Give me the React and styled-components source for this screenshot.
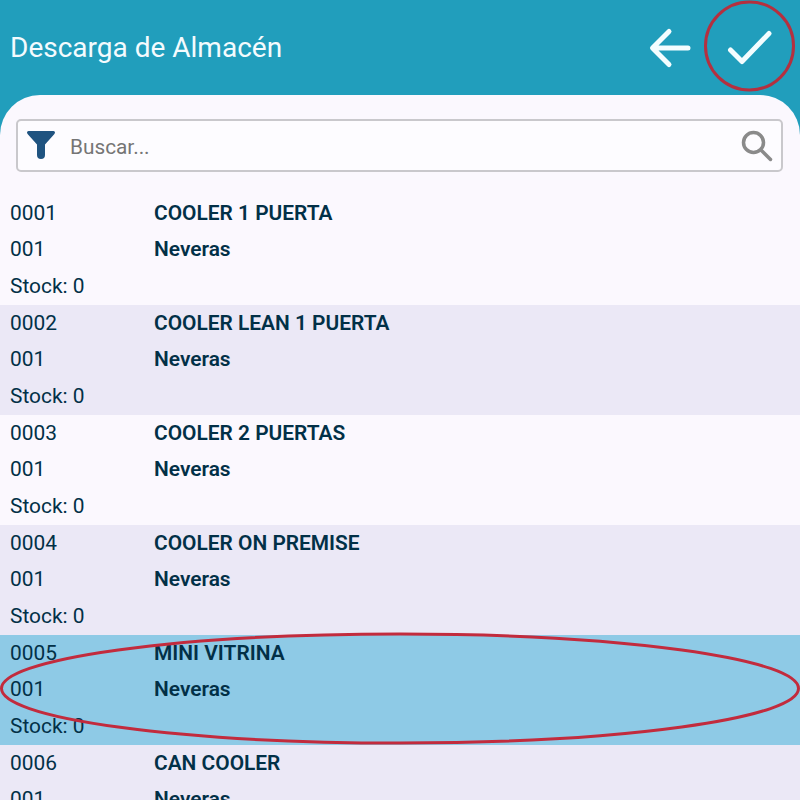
import React from 'react';
import styled, { createGlobalStyle } from 'styled-components';

const Global = createGlobalStyle`
  html, body { margin: 0; padding: 0; background: #fbf8fe; }
  body { font-family: Roboto, "Liberation Sans", sans-serif; }
`;

const Screen = styled.div`
  position: relative;
  width: 800px;
  height: 800px;
  overflow: hidden;
  background: #219ebc;
`;

const Header = styled.header`
  height: 95px;
  display: flex;
  align-items: center;
  justify-content: space-between;
  padding-left: 10px;
  box-sizing: border-box;
`;

const Title = styled.h1`
  margin: 0;
  font-size: 28px;
  font-weight: 400;
  color: #f4fbfe;
`;

const Actions = styled.div`
  display: flex;
  align-items: center;
`;

const IconButton = styled.div`
  width: ${p => p.$w}px;
  height: 95px;
  display: flex;
  align-items: center;
  justify-content: center;
`;

const Body = styled.main`
  height: 705px;
  background: #fbf8fe;
  border-radius: 40px 40px 0 0;
  padding-top: 24px;
  box-sizing: border-box;
  overflow: hidden;
`;

const Search = styled.div`
  height: 53px;
  margin: 0 17px 0 16px;
  box-sizing: border-box;
  display: flex;
  align-items: center;
  padding: 0 8px 0 9px;
  background: #fdfcff;
  border: 2px solid #c9c8cc;
  border-radius: 5px;
`;

const FilterIcon = styled.svg`
  flex: none;
  margin-top: -2px;
`;

const SearchText = styled.span`
  flex: 1;
  margin-left: 15px;
  padding-top: 2px;
  font-size: 20.8px;
  color: #757575;
`;

const List = styled.div`
  margin-top: 23px;
`;

const Row = styled.div`
  display: grid;
  grid-template-columns: 144px 1fr;
  grid-auto-rows: 36.3px;
  height: 110px;
  padding: 0 10px;
  box-sizing: border-box;
  align-items: center;
  color: #023047;
  font-size: 20.9px;
  background: ${p => (p.$selected ? '#8ecae6' : p.$alt ? '#ebe8f6' : 'transparent')};
`;

const Cell = styled.div`
  white-space: nowrap;
`;

const Strong = styled(Cell)`
  font-weight: 600;
`;

const Ellipse = styled.svg`
  position: absolute;
  left: 0;
  top: 625px;
  pointer-events: none;
`;

const Circle = styled.svg`
  position: absolute;
  left: 700px;
  top: 0;
  pointer-events: none;
`;

const items = [
  ['0001', 'COOLER 1 PUERTA'],
  ['0002', 'COOLER LEAN 1 PUERTA'],
  ['0003', 'COOLER 2 PUERTAS'],
  ['0004', 'COOLER ON PREMISE'],
  ['0005', 'MINI VITRINA'],
  ['0006', 'CAN COOLER'],
];

export default function App() {
  return (
    <Screen>
      <Global />
      <Header>
        <Title>Descarga de Almacén</Title>
        <Actions>
          <IconButton $w={60}>
            <svg width="44" height="44" viewBox="0 0 44 44" fill="none" stroke="#f4fdff" strokeWidth="5" strokeLinecap="round" strokeLinejoin="round">
              <path d="M40 22H5M21 5.5 4.5 22 21 38.5" />
            </svg>
          </IconButton>
          <IconButton $w={100}>
            <svg width="46" height="36" viewBox="0 0 46 36" fill="none" stroke="#f4fdff" strokeWidth="5" strokeLinecap="round" strokeLinejoin="round">
              <path d="M3.5 20 15 31.5 42 3.5" />
            </svg>
          </IconButton>
        </Actions>
      </Header>
      <Body>
        <Search>
          <FilterIcon width="28" height="28" viewBox="0 0 28 28">
            <path d="M0 1.5Q0 0 1.5 0h25Q28 0 28 1.5q0 .8-.8 1.7L18 13.5V24a4 4 0 0 1-8 0V13.5L.8 3.2Q0 2.3 0 1.5Z" fill="#1f5380" />
          </FilterIcon>
          <SearchText>Buscar...</SearchText>
          <svg width="32" height="32" viewBox="0 0 32 32" fill="none" stroke="#8a8a8a" strokeWidth="3.5" strokeLinecap="round">
            <circle cx="12.5" cy="12.5" r="10" />
            <path d="M20 20 29.5 29.5" />
          </svg>
        </Search>
        <List>
          {items.map(([code, name], i) => (
            <Row key={code} $alt={i % 2 === 1} $selected={code === '0005'}>
              <Cell>{code}</Cell>
              <Strong>{name}</Strong>
              <Cell>001</Cell>
              <Strong>Neveras</Strong>
              <Cell>Stock: 0</Cell>
            </Row>
          ))}
        </List>
      </Body>
      <Circle width="100" height="95" viewBox="0 0 100 95" fill="none">
        <ellipse cx="49.5" cy="46" rx="44" ry="44" stroke="#b4303f" strokeWidth="3" />
      </Circle>
      <Ellipse width="800" height="125" viewBox="0 0 800 125" fill="none">
        <ellipse cx="400" cy="63.5" rx="398.5" ry="54.5" stroke="#c22b3d" strokeWidth="3" />
      </Ellipse>
    </Screen>
  );
}
